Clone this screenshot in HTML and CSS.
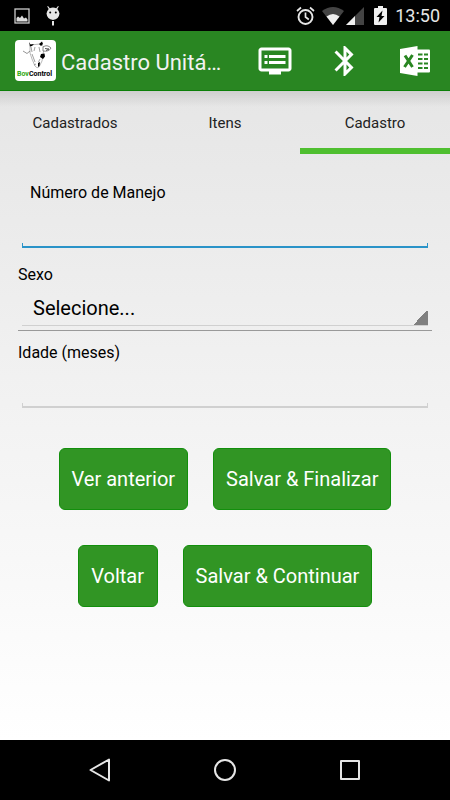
FILE: index.html
```html
<!DOCTYPE html>
<html lang="pt-BR">
<head>
    <meta charset="UTF-8">
    <meta name="viewport" content="width=device-width, initial-scale=1.0">
    <title>BovControl - Cadastro Unitário</title>
    <link rel="stylesheet" href="styles.css">
</head>
<body>
    <!-- Status bar -->
    <div class="status-bar">
        <div class="status-group notifications">
            <svg width="16" height="16" viewBox="0 0 16 16">
                <rect x="1" y="1" width="14" height="14" fill="none" stroke="#ccc" stroke-width="1.3"/>
                <path d="M2.500 13.500V10l1.500-1.500 2 1.500 2-2.500 2 3 2-1 1.500 2v2z" fill="#ddd"/>
            </svg>
            <svg width="14" height="20" viewBox="0 0 14 20">
                <path d="M2 0l1.800 2.300Q7 .9 10.200 2.300L12 0l.8.600-1.500 2.500Q13 5 13.500 7.500 13 13 7 14 1 13 .5 7.500 1 5 2.700 3.100L1.200.6z" fill="#e6e6e6"/>
                <circle cx="4.200" cy="6.500" r="1" fill="#000"/>
                <circle cx="9.800" cy="6.500" r="1" fill="#000"/>
                <path d="M6 15h2v4.500H6z" fill="#e6e6e6"/>
            </svg>
        </div>
        <div class="status-group">
            <svg class="alarm" width="19" height="20" viewBox="0 0 19 20">
                <circle cx="9.500" cy="11" r="7" fill="none" stroke="#e6e6e6" stroke-width="1.900"/>
                <path d="M9.500 6.500V11l3.300 2.500M1 5l4-3.500M18 5l-4-3.500" fill="none" stroke="#e6e6e6" stroke-width="1.700"/>
            </svg>
            <svg class="wifi" width="22" height="18" viewBox="0 0 22 18">
                <path d="M11 18L0 4Q11-4 22 4z" fill="#444"/>
                <path d="M11 18L4.500 9.500Q11 4.500 17.500 9.500z" fill="#f0f0f0"/>
            </svg>
            <svg class="signal" width="18" height="18" viewBox="0 0 18 18">
                <path d="M18 0v18H0z" fill="#444"/>
                <path d="M9 9v9H0z" fill="#f0f0f0"/>
            </svg>
            <svg class="battery" width="13" height="19" viewBox="0 0 13 19">
                <path d="M4 0h5v2h3q1 0 1 1v15q0 1-1 1H1q-1 0-1-1V3q0-1 1-1h3z" fill="#f0f0f0"/>
                <path d="M8.500 4.500L2.500 11h3L4.500 16.500 10.500 10h-3z" fill="#000"/>
            </svg>
            <span class="clock">13:50</span>
        </div>
    </div>

    <!-- Header -->
    <header>
        <svg class="logo" width="41" height="41" viewBox="0 0 41 41" role="img" aria-label="BovControl">
            <rect width="41" height="41" rx="4" fill="#fff"/>
            <!-- head outline -->
            <path d="M15 5l10-1 4 3-1 8-1 6-3 6q-2 2-4-1l-3-7-2-6z" fill="#fff" stroke="#888" stroke-width=".6"/>
            <!-- ears -->
            <path d="M28 7q4-3 8 1-2 4-8 3z" fill="#fff" stroke="#555" stroke-width=".7"/>
            <path d="M30 8.500l4 .5-3 1.500" fill="none" stroke="#333" stroke-width=".8"/>
            <path d="M8 11l4 2.500 3-2.500" fill="none" stroke="#666" stroke-width=".7"/>
            <!-- horns and dark patches -->
            <path d="M14 2l1.500 2.500L19 4l-2 2-2 .5zM24 4l3-2.500 1 2.500-2 2zM26 14l3.500-.5.5 3-2 2.500-3-2zM23 23l2-1-.5 4-1.500 1z" fill="#000"/>
            <!-- face lines -->
            <path d="M16 7l1 5M20 7l-1 4M24 7l1 5M17 14l3 8M25 19l-1.500 3M19 25l2-1" fill="none" stroke="#777" stroke-width=".7"/>
            <text x="2" y="36"><tspan fill="#3a1">Bov</tspan><tspan fill="#000">Control</tspan></text>
        </svg>
        <h1>Cadastro Unitá…</h1>
        <nav class="actions">
            <button type="button" aria-label="Leitor">
                <svg width="36" height="36" viewBox="0 0 24 24"><path d="M21 3H3c-1.100 0-2 .9-2 2v12c0 1.100.9 2 2 2h5v2h8v-2h5c1.100 0 2-.9 2-2V5c0-1.100-.9-2-2-2zm0 14H3V5h18v12zm-2-9H8v2h11V8zm0 4H8v2h11v-2zM7 8H5v2h2V8zm0 4H5v2h2v-2z"/></svg>
            </button>
            <button type="button" aria-label="Bluetooth">
                <svg width="36" height="36" viewBox="0 0 24 24"><path d="M17.710 7.710L12 2h-1v7.590L6.410 5 5 6.410 10.590 12 5 17.590 6.410 19 11 14.410V22h1l5.710-5.710-4.300-4.290 4.300-4.290zM13 5.830l1.880 1.880L13 9.590V5.830zm1.880 10.460L13 18.170v-3.760l1.880 1.880z"/></svg>
            </button>
            <button type="button" aria-label="Exportar Excel">
                <svg width="36" height="36" viewBox="0 0 36 36">
                    <path d="M3 6L20.500 3v30L3 30z"/>
                    <path d="M20 6.500h12q1 0 1 1v21q0 1-1 1H20z"/>
                    <path d="M21 11.500h4.500M27 11.500h4M21 16h4.500M27 16h4M21 20.500h4.500M27 20.500h4M21 25h4.500M27 25h4" stroke="#298622" stroke-width="2"/>
                    <path d="M8 12.500L15.500 24M15.500 12L7.500 24" stroke="#298622" stroke-width="3"/>
                </svg>
            </button>
        </nav>
    </header>

    <!-- Content -->
    <main>
        <nav class="tabs">
            <a href="#cadastrados">Cadastrados</a>
            <a href="#itens">Itens</a>
            <a href="#cadastro" class="active">Cadastro</a>
        </nav>

        <form>
            <label class="indent" for="manejo">Número de Manejo</label>
            <input class="focused" type="text" id="manejo" name="manejo">

            <label for="sexo">Sexo</label>
            <div class="select-box">
                <select id="sexo" name="sexo">
                    <option>Selecione...</option>
                    <option>Macho</option>
                    <option>Fêmea</option>
                </select>
            </div>

            <label for="idade">Idade (meses)</label>
            <input type="text" id="idade" name="idade">

            <div class="buttons">
                <button type="button">Ver anterior</button>
                <button type="submit">Salvar &amp; Finalizar</button>
            </div>
            <div class="buttons">
                <button type="button">Voltar</button>
                <button type="submit">Salvar &amp; Continuar</button>
            </div>
        </form>
    </main>

    <!-- Android navigation -->
    <footer>
        <button type="button" aria-label="Voltar">
            <svg width="24" height="24" viewBox="0 0 24 24"><path d="M21 1.500v21L2.500 12z"/></svg>
        </button>
        <button type="button" aria-label="Início">
            <svg width="24" height="24" viewBox="0 0 24 24"><circle cx="12" cy="12" r="10"/></svg>
        </button>
        <button type="button" aria-label="Recentes">
            <svg width="24" height="24" viewBox="0 0 24 24"><rect x="3" y="3" width="18" height="18"/></svg>
        </button>
    </footer>
</body>
</html>
```
FILE: styles.css
```css
/* General Styles */
* {
    box-sizing: border-box;
}

body {
    display: flex;
    flex-direction: column;
    min-height: 100vh;
    margin: 0;
    font-family: Roboto, sans-serif;
    color: #000;
    background: #fff;
}

svg {
    display: block;
}

button {
    border: none;
    padding: 0;
    background: none;
    font-family: inherit;
    cursor: pointer;
}

/* Status bar */
.status-bar {
    display: flex;
    justify-content: space-between;
    align-items: center;
    height: 31px;
    padding: 0 10px 0 14px;
    background: #000;
}

.status-group {
    display: flex;
    align-items: center;
}

.notifications {
    gap: 16px;
}

.alarm {
    margin-right: 7px;
}

.wifi {
    margin-right: 2px;
}

.signal {
    margin-right: 10px;
}

.battery {
    margin-right: 8px;
}

.clock {
    color: #e6e6e6;
    font-size: 18px;
}

/* Header */
header {
    display: flex;
    align-items: center;
    height: 60px;
    padding: 0 17px 0 15px;
    background: #298622;
    border-bottom: 1px solid #0b7f08;
}

.logo {
    flex: none;
}

.logo text {
    font: bold 7px Roboto, sans-serif;
}

header h1 {
    flex: 1;
    margin: 0 0 0 5px;
    padding-top: 3px;
    color: #f2f2f2;
    font-size: 22px;
    font-weight: normal;
    white-space: nowrap;
}

.actions {
    display: flex;
    gap: 34px;
}

.actions svg {
    fill: #fff;
}

/* Content */
main {
    flex: 1;
    background: linear-gradient(rgba(0, 0, 0, 0.1), transparent 16px), linear-gradient(#e6e6e6, #fff);
}

.tabs {
    display: flex;
}

.tabs a {
    flex: 1;
    height: 63px;
    padding-top: 6px;
    border-bottom: 6px solid transparent;
    color: #222;
    font-size: 15px;
    line-height: 52px;
    text-align: center;
    text-decoration: none;
}

.tabs a.active {
    border-bottom-color: #4fbf30;
}

/* Form */
form {
    padding: 24px 18px;
}

label {
    display: block;
    font-size: 16px;
    line-height: 30px;
}

label.indent {
    padding-left: 12px;
}

/* Underline with a small tick at each end */
input {
    display: block;
    width: calc(100% - 8px);
    height: 40px;
    margin: 0 4px 12px;
    padding: 0 8px;
    border: none;
    outline: none;
    font: 20px Roboto, sans-serif;
    --line: #d0d0d0;
    background:
        linear-gradient(var(--line), var(--line)) left bottom / 1px 5px no-repeat,
        linear-gradient(var(--line), var(--line)) right bottom / 1px 5px no-repeat,
        linear-gradient(var(--line), var(--line)) left bottom / 100% 2px no-repeat;
}

input.focused {
    --line: #2a93c8;
}

.select-box {
    padding: 0 4px 4px;
    margin-bottom: 7px;
    border-bottom: 1px solid #999;
}

select {
    display: block;
    width: 100%;
    height: 36px;
    padding: 0 11px;
    border: none;
    border-bottom: 1px solid #d0d0d0;
    border-radius: 0;
    outline: none;
    appearance: none;
    color: #000;
    font: 20px Roboto, sans-serif;
    background: linear-gradient(135deg, transparent 50%, #808080 50%) right bottom / 15px 15px no-repeat;
}

/* Buttons */
.buttons {
    display: flex;
    justify-content: center;
    gap: 25px;
    margin-top: 35px;
}

input + .buttons {
    margin-top: 40px;
}

.buttons button {
    min-width: 80px;
    height: 62px;
    padding: 0 12px;
    border: 1px solid #128f0c;
    border-radius: 6px;
    background: #319524;
    color: #fff;
    font-size: 20px;
}

/* Android navigation */
footer {
    display: flex;
    justify-content: center;
    align-items: center;
    gap: 101px;
    height: 60px;
    background: #000;
}

footer svg {
    fill: none;
    stroke: #e6e6e6;
    stroke-width: 2;
    stroke-linejoin: round;
}
```
